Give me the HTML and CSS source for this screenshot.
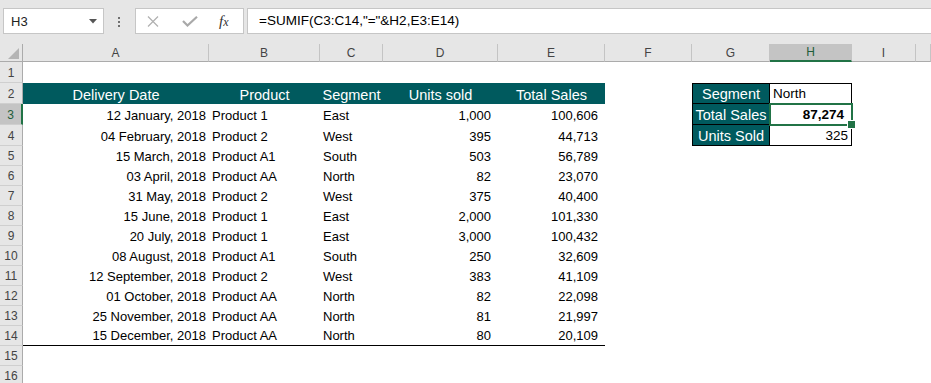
FILE: index.html
```html
<!DOCTYPE html>
<html lang="en">
<head>
    <meta charset="UTF-8">
    <meta name="viewport" content="width=device-width, initial-scale=1.0">
    <title>SUMIF - Book1</title>
    <link rel="stylesheet" href="styles.css">
</head>
<body>
    <div class="formula-bar">
        <div class="name-box">
            <span>H3</span>
            <svg class="drop" width="8" height="5" viewBox="0 0 8 5"><path d="M0 0 L8 0 L4 4.5 Z"/></svg>
        </div>
        <div class="grip"><i></i><i></i><i></i></div>
        <div class="fx-box">
            <svg class="cancel" width="12" height="11" viewBox="0 0 12 11"><path d="M1 0.5 L11 10.5 M11 0.5 L1 10.5"/></svg>
            <svg class="enter" width="16" height="11" viewBox="0 0 16 11"><path d="M1 5 L5.5 9.5 L15 0.8"/></svg>
            <span class="fx">f<span class="fx-x">x</span></span>
        </div>
        <div class="formula">=SUMIF(C3:C14,"="&amp;H2,E3:E14)</div>
    </div>

    <div class="sheet">
        <div class="row head">
            <div class="corner"><svg width="22" height="17" viewBox="0 0 22 17"><path d="M19 4 L19 15 L8 15 Z"/></svg></div>
            <div class="ch">A</div>
            <div class="ch">B</div>
            <div class="ch">C</div>
            <div class="ch">D</div>
            <div class="ch">E</div>
            <div class="ch">F</div>
            <div class="ch">G</div>
            <div class="ch on">H</div>
            <div class="ch">I</div>
            <div class="ch"></div>
        </div>

        <div class="row tall"><div class="rh">1</div></div>
        <div class="row tall">
            <div class="rh">2</div>
            <div class="c th">Delivery Date</div>
            <div class="c th">Product</div>
            <div class="c th">Segment</div>
            <div class="c th">Units sold</div>
            <div class="c th">Total Sales</div>
            <div class="c key top">Segment</div>
            <div class="c val top">North</div>
        </div>
        <div class="row tall">
            <div class="rh on">3</div>
            <div class="c r">12 January, 2018</div>
            <div class="c">Product 1</div>
            <div class="c">East</div>
            <div class="c r num">1,000</div>
            <div class="c r num">100,606</div>
            <div class="c key">Total Sales</div>
            <div class="c val r num bold sel">87,274</div>
        </div>
        <div class="row tall">
            <div class="rh">4</div>
            <div class="c r">04 February, 2018</div>
            <div class="c">Product 2</div>
            <div class="c">West</div>
            <div class="c r num">395</div>
            <div class="c r num">44,713</div>
            <div class="c key">Units Sold</div>
            <div class="c val r">325</div>
        </div>
        <div class="row">
            <div class="rh">5</div>
            <div class="c r">15 March, 2018</div>
            <div class="c">Product A1</div>
            <div class="c">South</div>
            <div class="c r num">503</div>
            <div class="c r num">56,789</div>
        </div>
        <div class="row">
            <div class="rh">6</div>
            <div class="c r">03 April, 2018</div>
            <div class="c">Product AA</div>
            <div class="c">North</div>
            <div class="c r num">82</div>
            <div class="c r num">23,070</div>
        </div>
        <div class="row">
            <div class="rh">7</div>
            <div class="c r">31 May, 2018</div>
            <div class="c">Product 2</div>
            <div class="c">West</div>
            <div class="c r num">375</div>
            <div class="c r num">40,400</div>
        </div>
        <div class="row">
            <div class="rh">8</div>
            <div class="c r">15 June, 2018</div>
            <div class="c">Product 1</div>
            <div class="c">East</div>
            <div class="c r num">2,000</div>
            <div class="c r num">101,330</div>
        </div>
        <div class="row">
            <div class="rh">9</div>
            <div class="c r">20 July, 2018</div>
            <div class="c">Product 1</div>
            <div class="c">East</div>
            <div class="c r num">3,000</div>
            <div class="c r num">100,432</div>
        </div>
        <div class="row">
            <div class="rh">10</div>
            <div class="c r">08 August, 2018</div>
            <div class="c">Product A1</div>
            <div class="c">South</div>
            <div class="c r num">250</div>
            <div class="c r num">32,609</div>
        </div>
        <div class="row">
            <div class="rh">11</div>
            <div class="c r">12 September, 2018</div>
            <div class="c">Product 2</div>
            <div class="c">West</div>
            <div class="c r num">383</div>
            <div class="c r num">41,109</div>
        </div>
        <div class="row">
            <div class="rh">12</div>
            <div class="c r">01 October, 2018</div>
            <div class="c">Product AA</div>
            <div class="c">North</div>
            <div class="c r num">82</div>
            <div class="c r num">22,098</div>
        </div>
        <div class="row">
            <div class="rh">13</div>
            <div class="c r">25 November, 2018</div>
            <div class="c">Product AA</div>
            <div class="c">North</div>
            <div class="c r num">81</div>
            <div class="c r num">21,997</div>
        </div>
        <div class="row last">
            <div class="rh">14</div>
            <div class="c r">15 December, 2018</div>
            <div class="c">Product AA</div>
            <div class="c">North</div>
            <div class="c r num">80</div>
            <div class="c r num">20,109</div>
        </div>
        <div class="row"><div class="rh">15</div></div>
        <div class="row"><div class="rh">16</div></div>
    </div>
</body>
</html>
```

FILE: styles.css
```css
* {
    box-sizing: border-box;
}
body {
    margin: 0;
    font-family: 'Liberation Sans', Arial, sans-serif;
    background: #fff;
    color: #000;
    overflow: hidden;
}

/* formula bar */
.formula-bar {
    display: flex;
    align-items: flex-start;
    height: 44px;
    padding-top: 8px;
    background: #e6e6e6;
}
.name-box {
    display: flex;
    align-items: center;
    justify-content: space-between;
    width: 101px;
    height: 26px;
    margin-left: 3px;
    padding: 0 6px 0 7px;
    background: #fff;
    border: 1px solid #c6c6c6;
    font-size: 13px;
    color: #222;
}
.drop {
    fill: #555;
}
.grip {
    display: flex;
    flex-direction: column;
    gap: 2px;
    width: 2px;
    margin: 9px 15px 0 14px;
}
.grip i {
    display: block;
    width: 2px;
    height: 2px;
    background: #6f6f6f;
}
.fx-box {
    display: flex;
    align-items: center;
    width: 109px;
    height: 26px;
    background: #fff;
    border: 1px solid #c6c6c6;
}
.cancel {
    margin-left: 11px;
    fill: none;
    stroke: #b0b0b0;
    stroke-width: 1.2;
}
.enter {
    margin-left: 23px;
    fill: none;
    stroke: #a9a9a9;
    stroke-width: 2.2;
}
.fx {
    margin-left: 21px;
    font-family: 'Liberation Serif', 'Times New Roman', serif;
    font-style: italic;
    font-size: 15px;
    color: #333;
}
.fx-x {
    font-size: 12px;
}
.formula {
    flex: 1;
    height: 26px;
    margin-left: 3px;
    padding-left: 11px;
    background: #fff;
    border: 1px solid #c6c6c6;
    border-right: none;
    font-size: 13.5px;
    line-height: 24px;
}

/* grid */
.row {
    display: grid;
    grid-template-columns: 23px 186px 111px 63px 115px 107px 87px 78px 82px 64px 1fr;
    height: 20px;
}
.row.tall {
    height: 21px;
}
.row.head {
    height: 18px;
    background: #e6e6e6;
}
.corner {
    border-right: 1px solid #ababab;
    border-bottom: 1px solid #ababab;
}
.corner svg {
    display: block;
    fill: #b4b4b4;
}
.ch {
    display: flex;
    align-items: center;
    justify-content: center;
    border-right: 1px solid #c4c4c4;
    border-bottom: 1px solid #ababab;
    font-size: 12px;
    color: #444;
}
.ch.on {
    background: #c4c4c4;
    color: #1e5e3a;
    border-bottom: 2px solid #217346;
}
.rh {
    display: flex;
    align-items: center;
    justify-content: center;
    padding-top: 1px;
    background: #e6e6e6;
    border-right: 1px solid #ababab;
    border-bottom: 1px solid #cfcfcf;
    font-size: 12px;
    color: #444;
}
.rh.on {
    background: #c4c4c4;
    color: #1e5e3a;
    border-right: 2px solid #217346;
}

/* cells */
.c {
    display: flex;
    align-items: flex-end;
    padding: 0 3px 1px;
    font-size: 13px;
    line-height: 16px;
    white-space: nowrap;
}
.c.r {
    justify-content: flex-end;
}
.c.num {
    padding-right: 7px;
}
.c.bold {
    font-weight: bold;
}
.th {
    justify-content: center;
    background: #005a5e;
    color: #fff;
    font-size: 14.5px;
}
.last .c {
    border-bottom: 1px solid #000;
}

/* lookup block G2:H4 */
.key {
    grid-column: 8;
    justify-content: center;
    padding: 0 1px 1px;
    background: #005a5e;
    color: #fff;
    font-size: 14.5px;
    border: 1px solid #000;
    border-top: none;
}
.val {
    grid-column: 9;
    border-right: 1px solid #000;
    border-bottom: 1px solid #000;
    font-size: 13.5px;
}
.key.top,
.val.top {
    border-top: 1px solid #000;
}
.sel {
    position: relative;
}
.sel::after {
    content: '';
    position: absolute;
    top: -1px;
    left: -1px;
    right: -2px;
    bottom: -2px;
    border: 2px solid #217346;
}
.sel::before {
    content: '';
    position: absolute;
    right: -5px;
    bottom: -5px;
    width: 7px;
    height: 7px;
    background: #217346;
    border: 1px solid #fff;
    z-index: 1;
}
```
